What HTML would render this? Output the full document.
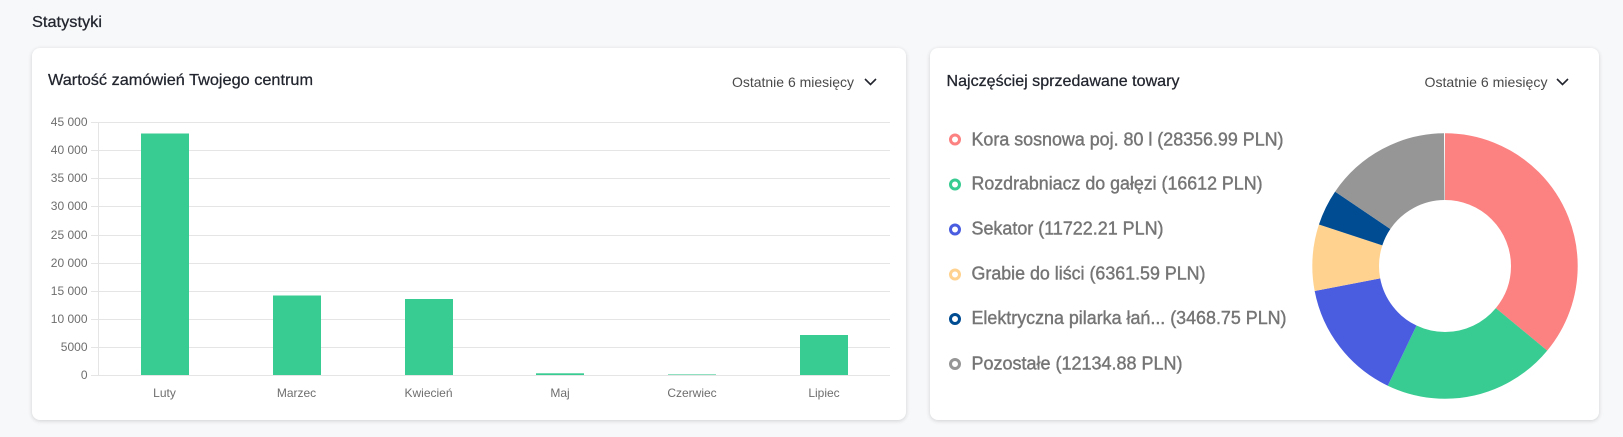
<!DOCTYPE html>
<html lang="pl">
<head>
<meta charset="utf-8">
<title>Statystyki</title>
<style>
html,body{margin:0;padding:0;width:1623px;height:437px;overflow:hidden;background:#f7f8fa}
.card{position:absolute;top:48px;height:372px;background:#fff;border-radius:8px;box-shadow:0 1px 4px rgba(0,0,0,.16)}
svg{position:absolute;left:0;top:0}
text{font-family:"Liberation Sans",sans-serif}
.h{font-size:16px;fill:#22252e;stroke:#22252e;stroke-width:.25}
.s{font-size:14px;fill:#4a4a4a}
.a{font-size:12px;fill:#6e6e6e}
.l{font-size:18px;fill:#757575;stroke:#757575;stroke-width:.4}
.g{stroke:#e5e5e5;stroke-width:1}
</style>
</head>
<body>
<div class="card" style="left:32px;width:874px"></div>
<div class="card" style="left:930px;width:669px"></div>
<svg width="1623" height="437" viewBox="0 0 1623 437">
<text x="32" y="27" class="h" textLength="70" lengthAdjust="spacingAndGlyphs">Statystyki</text>
<text x="48" y="85" class="h" textLength="265" lengthAdjust="spacingAndGlyphs">Wartość zamówień Twojego centrum</text>
<text x="732" y="87" class="s" textLength="122" lengthAdjust="spacingAndGlyphs">Ostatnie 6 miesięcy</text>
<path d="M865 79l5.5 5.5 5.5-5.5" fill="none" stroke="#22252e" stroke-width="1.6"/>
<text x="946.5" y="86" class="h" textLength="233" lengthAdjust="spacingAndGlyphs">Najczęściej sprzedawane towary</text>
<text x="1424.5" y="87" class="s" textLength="123" lengthAdjust="spacingAndGlyphs">Ostatnie 6 miesięcy</text>
<path d="M1557 79l5.5 5.5 5.5-5.5" fill="none" stroke="#22252e" stroke-width="1.6"/>

<g class="g">
<path d="M91 122.5H890M91 150.5H890M91 178.5H890M91 206.5H890M91 235.5H890M91 263.5H890M91 291.5H890M91 319.5H890M91 347.5H890M91 375.5H890M98.5 122V375"/>
</g>
<g class="a" text-anchor="end">
<text x="87.5" y="126">45 000</text>
<text x="87.5" y="154">40 000</text>
<text x="87.5" y="182">35 000</text>
<text x="87.5" y="210">30 000</text>
<text x="87.5" y="239">25 000</text>
<text x="87.5" y="267">20 000</text>
<text x="87.5" y="295">15 000</text>
<text x="87.5" y="323">10 000</text>
<text x="87.5" y="351">5000</text>
<text x="87.5" y="379">0</text>
</g>
<g fill="#38cb92">
<rect x="141" y="133.5" width="48" height="241.5"/>
<rect x="273" y="295.5" width="48" height="79.5"/>
<rect x="405" y="299" width="48" height="76"/>
<rect x="536" y="373.3" width="48" height="1.7"/>
<rect x="668" y="374" width="48" height="1" fill="#8fe0c0"/>
<rect x="800" y="335" width="48" height="40"/>
</g>
<g class="a" text-anchor="middle">
<text x="164.5" y="397">Luty</text>
<text x="296.5" y="397">Marzec</text>
<text x="428.5" y="397">Kwiecień</text>
<text x="560" y="397">Maj</text>
<text x="692" y="397">Czerwiec</text>
<text x="824" y="397">Lipiec</text>
</g>

<g fill="none" stroke-width="3">
<circle cx="955" cy="139.5" r="4.5" stroke="#fc8181"/>
<circle cx="955" cy="184.5" r="4.5" stroke="#38cb92"/>
<circle cx="955" cy="229.5" r="4.5" stroke="#4a5de0"/>
<circle cx="955" cy="274.5" r="4.5" stroke="#ffd28f"/>
<circle cx="955" cy="319" r="4.5" stroke="#004c92"/>
<circle cx="955" cy="364" r="4.5" stroke="#969696"/>
</g>
<text x="971.5" y="145.5" class="l" textLength="312" lengthAdjust="spacingAndGlyphs">Kora sosnowa poj. 80 l (28356.99 PLN)</text>
<text x="971.5" y="189.5" class="l" textLength="291" lengthAdjust="spacingAndGlyphs">Rozdrabniacz do gałęzi (16612 PLN)</text>
<text x="971.5" y="234.5" class="l" textLength="192" lengthAdjust="spacingAndGlyphs">Sekator (11722.21 PLN)</text>
<text x="971.5" y="279.5" class="l" textLength="234" lengthAdjust="spacingAndGlyphs">Grabie do liści (6361.59 PLN)</text>
<text x="971.5" y="324" class="l" textLength="315" lengthAdjust="spacingAndGlyphs">Elektryczna pilarka łań... (3468.75 PLN)</text>
<text x="971.5" y="369.5" class="l" textLength="211" lengthAdjust="spacingAndGlyphs">Pozostałe (12134.88 PLN)</text>

<g fill="none" stroke-width="66.7" transform="rotate(-90 1445 266)">
<circle cx="1445" cy="266" r="99.35" pathLength="78656.42" stroke="#fc8181" stroke-dasharray="28356.99 78656.42"/>
<circle cx="1445" cy="266" r="99.35" pathLength="78656.42" stroke="#38cb92" stroke-dasharray="16612 78656.42" stroke-dashoffset="-28356.99"/>
<circle cx="1445" cy="266" r="99.35" pathLength="78656.42" stroke="#4a5de0" stroke-dasharray="11722.21 78656.42" stroke-dashoffset="-44968.99"/>
<circle cx="1445" cy="266" r="99.35" pathLength="78656.42" stroke="#ffd28f" stroke-dasharray="6361.59 78656.42" stroke-dashoffset="-56691.2"/>
<circle cx="1445" cy="266" r="99.35" pathLength="78656.42" stroke="#004c92" stroke-dasharray="3468.75 78656.42" stroke-dashoffset="-63052.79"/>
<circle cx="1445" cy="266" r="99.35" pathLength="78656.42" stroke="#969696" stroke-dasharray="12134.88 78656.42" stroke-dashoffset="-66521.54"/>
</g>
</svg>
</body>
</html>
